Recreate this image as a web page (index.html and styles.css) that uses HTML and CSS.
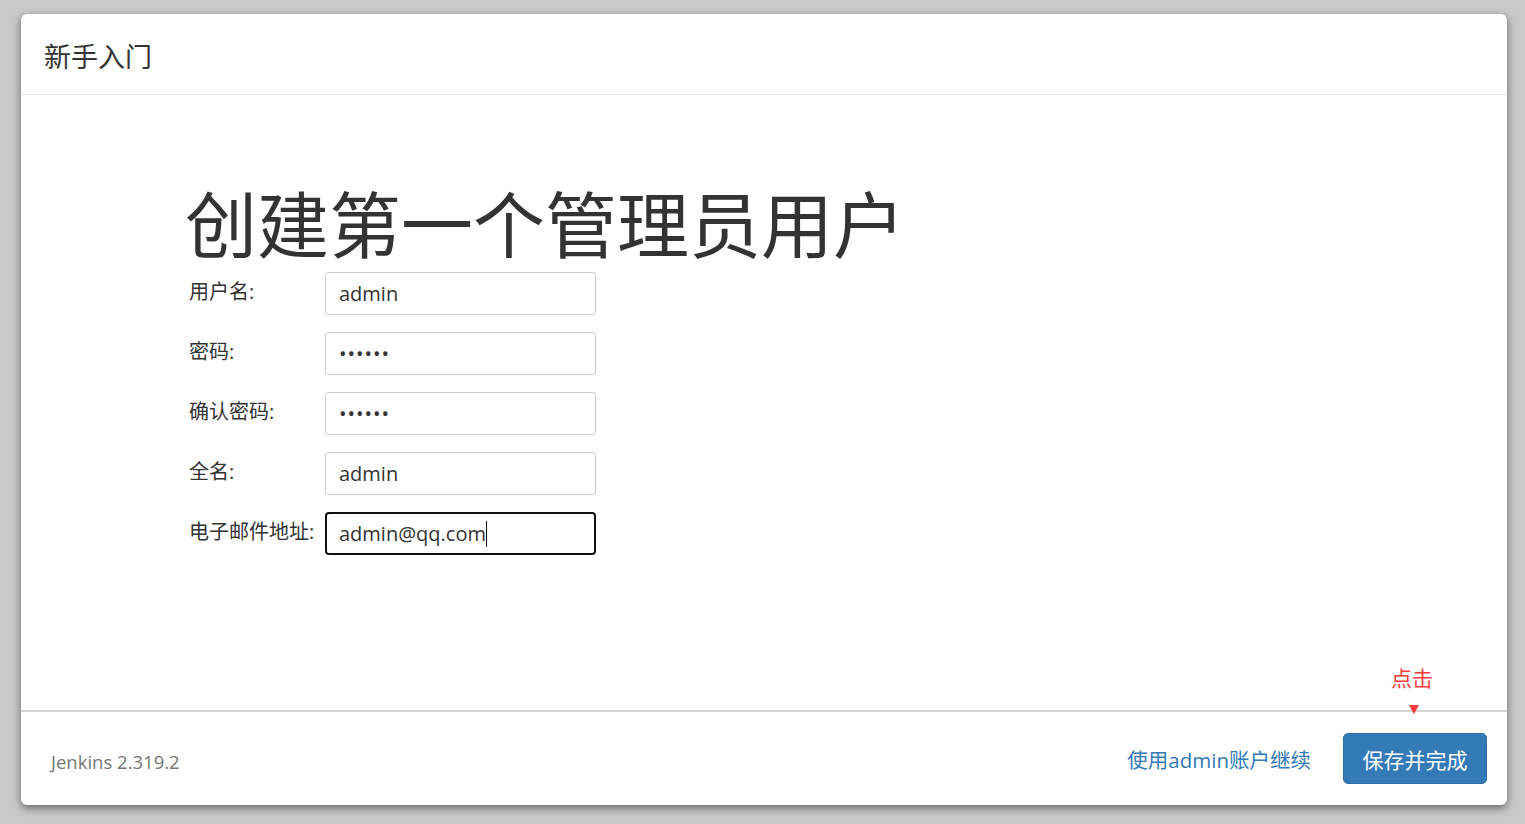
FILE: index.html
```html
<!DOCTYPE html>
<html lang="zh-CN">
<head>
    <meta charset="UTF-8">
    <title>新手入门</title>
    <link rel="stylesheet" href="styles.css">
</head>
<body>
    <div class="dialog">
        <div class="dialog-header">
            <h4 class="dialog-title">新手入门</h4>
        </div>
        <div class="dialog-body">
            <h1 class="page-title">创建第一个管理员用户</h1>
            <form class="user-form">
                <label for="username">用户名:</label>
                <input type="text" id="username" value="admin">

                <label for="password1">密码:</label>
                <input type="password" id="password1" value="123456">

                <label for="password2">确认密码:</label>
                <input type="password" id="password2" value="123456">

                <label for="fullname">全名:</label>
                <input type="text" id="fullname" value="admin">

                <label for="email">电子邮件地址:</label>
                <div class="focused">admin@qq.com<span class="caret"></span></div>
            </form>
        </div>
        <div class="dialog-footer">
            <span class="version">Jenkins 2.319.2</span>
            <a class="skip-link" href="#">使用admin账户继续</a>
            <div class="save-wrap">
                <span class="hint">点击</span>
                <span class="hint-arrow"></span>
                <button type="button" class="btn-save">保存并完成</button>
            </div>
        </div>
    </div>
</body>
</html>
```

FILE: styles.css
```css
* {
    margin: 0;
    padding: 0;
    box-sizing: border-box;
    font-family: "Open Sans", "Noto Sans CJK SC", sans-serif;
}

body {
    background: #c9c9c9;
    width: 1525px;
    height: 824px;
    padding: 14px 18px 19px 21px;
    color: #333;
}

.dialog {
    background: #fff;
    height: 100%;
    border-radius: 6px;
    box-shadow: 0 3px 9px rgba(0, 0, 0, 0.5);
    display: flex;
    flex-direction: column;
}

.dialog-header {
    height: 81px;
    border-bottom: 1px solid #e5e5e5;
    padding: 0 23px;
    display: flex;
    align-items: center;
}

.dialog-title {
    font-size: 27px;
    font-weight: 400;
    color: #333;
    margin-top: 2px;
}

.dialog-body {
    flex: 1;
    padding: 83px 0 0 164px;
}

.page-title {
    font-size: 72px;
    font-weight: 400;
    line-height: 92px;
    color: #333;
}

.user-form {
    display: grid;
    grid-template-columns: 136px 271px;
    row-gap: 17px;
    align-items: center;
    margin-top: 2px;
    padding-left: 4px;
}

.user-form label {
    font-size: 20px;
    color: #333;
    position: relative;
    top: -3px;
}

.user-form input,
.focused {
    height: 43px;
    border: 1px solid #ccc;
    border-radius: 3px;
    padding: 0 13px;
    font-size: 20px;
    color: #333;
    background: #fff;
}

.user-form input[type="password"] {
    letter-spacing: 1px;
}

.focused {
    border: 2px solid #111;
    border-radius: 4px;
    padding: 0 12px;
    display: flex;
    align-items: center;
}

.caret {
    display: inline-block;
    width: 1px;
    height: 26px;
    background: #111;
}

.dialog-footer {
    height: 95px;
    border-top: 2px solid #d6d6d6;
    display: flex;
    align-items: center;
    padding: 0 20px 0 30px;
}

.version {
    font-size: 18.5px;
    color: #777;
    margin-top: 6px;
    flex: 1;
}

.skip-link {
    font-size: 20.5px;
    color: #337ab7;
    text-decoration: none;
    margin-right: 32px;
}

.save-wrap {
    position: relative;
}

.hint {
    position: absolute;
    left: 48px;
    top: -71px;
    font-size: 21px;
    color: #ff3a3a;
    white-space: nowrap;
}

.hint-arrow {
    position: absolute;
    left: 66px;
    top: -28px;
    width: 0;
    height: 0;
    border-left: 5px solid transparent;
    border-right: 5px solid transparent;
    border-top: 9px solid #ff3a3a;
}

.btn-save {
    background: #337ab7;
    color: #fff;
    border: 1px solid #2e6da4;
    border-radius: 5px;
    width: 144px;
    height: 51px;
    font-size: 21px;
    cursor: pointer;
}
```
